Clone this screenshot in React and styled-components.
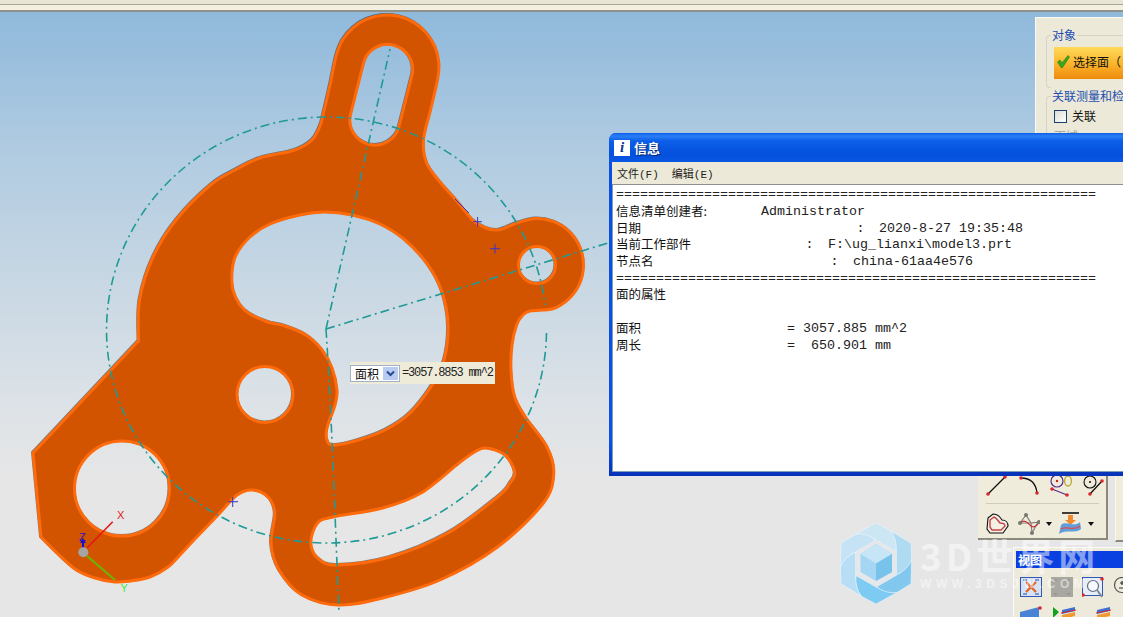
import React from "react";
import styled, { createGlobalStyle } from "styled-components";

const GlobalStyle = createGlobalStyle`
  html, body { margin: 0; padding: 0; background: #e6e6e6; }
  body { font-family: "Liberation Sans", "Noto Sans CJK SC", sans-serif; }
`;

const CJK = `"Noto Sans CJK SC", "Liberation Sans", sans-serif`;
const MONO = `"Liberation Mono", "Noto Sans CJK SC", monospace`;

// catmull-rom through the traced points, so the part outline stays editable
const spline = (pts, closed) => {
  const n = pts.length;
  const at = (i) => (closed ? pts[(i + n) % n] : pts[Math.max(0, Math.min(n - 1, i))]);
  let d = `M${pts[0][0]} ${pts[0][1]}`;
  const last = closed ? n : n - 1;
  for (let i = 0; i < last; i++) {
    const [p0, p1, p2, p3] = [at(i - 1), at(i), at(i + 1), at(i + 2)];
    const c1 = [p1[0] + (p2[0] - p0[0]) / 6, p1[1] + (p2[1] - p0[1]) / 6];
    const c2 = [p2[0] - (p3[0] - p1[0]) / 6, p2[1] - (p3[1] - p1[1]) / 6];
    d += `C${c1[0].toFixed(1)} ${c1[1].toFixed(1)} ${c2[0].toFixed(1)} ${c2[1].toFixed(1)} ${p2[0]} ${p2[1]}`;
  }
  return closed ? d + "Z" : d;
};

const arc = (cx, cy, r, from, to, steps) =>
  Array.from({ length: steps + 1 }, (_, i) => {
    const a = ((from + ((to - from) * i) / steps) * Math.PI) / 180;
    return [+(cx + r * Math.cos(a)).toFixed(1), +(cy + r * Math.sin(a)).toFixed(1)];
  });

const circle = (cx, cy, r) =>
  `M${cx - r} ${cy}A${r} ${r} 0 1 0 ${cx + r} ${cy}A${r} ${r} 0 1 0 ${cx - r} ${cy}Z`;

const outline = [
  [138.5, 341], [139.5, 300], [153, 257], [176, 220], [210.5, 185], [235, 170], [260, 158], [294.7, 150],
  [312, 140], [320, 126], [323, 115], [330, 85],
  ...arc(387, 67, 52, 193, 373, 10),
  [430.5, 110], [423.5, 140], [426.7, 163], [440, 182], [456, 200], [472.6, 220], [486, 228], [497.5, 230], [507, 227],
  ...arc(537, 265, 46.5, -115, 70, 8),
  [530, 311], [522, 316], [516.6, 325], [512, 345], [511, 370], [514.7, 397], [526, 418], [547, 447], [553.8, 473],
  [543.4, 503], [497.5, 547], [440, 580], [382.7, 598], [338.7, 605], [302, 595], [279, 570], [271, 543],
  [274.8, 513], [268, 497], [252.6, 490], [237, 495], [218, 515], [193, 541], [180, 555], [168, 567],
  [150, 577], [130, 581], [115, 582], [95, 578], [76.5, 570], [58, 554], [41, 537],
];

const centerHole = [
  [232, 272], [236, 255], [250, 237], [270, 224], [300, 215], [325, 212], [352, 215], [380, 224], [405, 240],
  [428, 265], [442, 292], [448, 325], [444, 360], [432, 385], [410, 413], [385, 430], [355, 441], [333, 445],
  [327, 440], [327, 428], [335, 405], [337, 390], [332, 368], [322, 350], [306, 335], [285, 326], [268, 322],
  [250, 314], [240, 305], [233, 290],
];

const arcSlot = [
  [486, 448], [505, 455], [514.7, 472], [510, 483], [497.5, 497], [447.8, 533], [390, 557], [336.8, 565], [317.6, 558],
  [310.8, 542], [317.6, 523], [333, 517], [382.7, 508], [421, 493], [459, 463], [474.6, 452],
];

const topSlot = "M363.8 61.9A25 25 0 0 1 412.2 74.1L398.7 127.6A25 25 0 0 1 350.3 115.4Z";

const partPath =
  spline(outline) + "L33 453L138.5 341Z" +
  spline(centerHole, true) + spline(arcSlot, true) + topSlot +
  circle(265, 394.5, 28) + circle(122, 488.5, 47.5) + circle(537, 265, 18.5);

const infoRows = [
  { text: "=".repeat(60) },
  { label: "信息清单创建者:", width: 145, value: "Administrator" },
  { label: "日期", width: 240.5, sep: ":", value: "2020-8-27 19:35:48" },
  { label: "当前工作部件", width: 189.5, sep: ":", value: "F:\\ug_lianxi\\model3.prt" },
  { label: "节点名", width: 214.5, sep: ":", value: "china-61aa4e576" },
  { text: "=".repeat(60) },
  { label: "面的属性" },
  {},
  { label: "面积", width: 171, value: "= 3057.885 mm^2" },
  { label: "周长", width: 171, value: "=  650.901 mm" },
];

const bladeColors = ["#cde6f3", "#aedaf2", "#82c8ee", "#7dcbf3", "#b7def5", "#c5e3f5"];

const Screen = styled.div`
  position: relative;
  width: 1123px;
  height: 617px;
  overflow: hidden;
  background: linear-gradient(180deg, #8fb9db 12px, #b0cbe1 150px, #cbd9e4 300px, #dce2e7 400px, #e6e6e6 480px);
`;

const TopBar = styled.div`
  height: 10px;
  background: linear-gradient(180deg, #e9e5d5 0 4px, #a9a898 4px 5px, #f3f0e2 5px 10px);
  border-bottom: 2px solid #8f9088;
`;

const PartCanvas = styled.svg`
  position: absolute;
  inset: 0;
  width: 1123px;
  height: 617px;
`;

const AxisLabel = styled.text`
  font-family: "Liberation Sans", sans-serif;
  font-size: 11px;
  fill: ${(p) => p.$color};
`;

const AreaTip = styled.div`
  position: absolute;
  left: 350px;
  top: 362px;
  width: 145px;
  height: 22px;
  display: flex;
  align-items: center;
  gap: 2px;
  background: #efebd9;
`;

const TipSelect = styled.div`
  width: 50px;
  height: 17px;
  display: flex;
  align-items: center;
  justify-content: space-between;
  padding: 0 1px 0 4px;
  box-sizing: border-box;
  background: #fff;
  border: 1px solid #a3b1c4;
  font: 12px/15px ${CJK};
  color: #111;
`;

const TipArrow = styled.span`
  width: 15px;
  height: 13px;
  display: flex;
  align-items: center;
  justify-content: center;
  background: #b8cbf0;
`;

const TipValue = styled.span`
  font: 12px "Liberation Mono", monospace;
  letter-spacing: -1.15px;
  color: #222;
  white-space: pre;
`;

const SideDialog = styled.div`
  position: absolute;
  left: 1035px;
  top: 17px;
  width: 100px;
  height: 130px;
  box-sizing: border-box;
  padding: 17px 0 0 10px;
  background: #ece9d8;
  border-left: 1px solid #fafafa;
  border-top: 1px solid #fafafa;
  overflow: hidden;
`;

const Group = styled.div`
  position: relative;
  height: ${(p) => p.$height}px;
  margin-bottom: ${(p) => p.$gap || 0}px;
  box-sizing: border-box;
  padding: 11px 0 0 7px;
  border: 1px solid #d6d3c3;
  border-right: 0;
  border-radius: 4px 0 0 4px;
`;

const Legend = styled.span`
  position: absolute;
  left: 4px;
  top: -10px;
  padding: 0 1px;
  background: #ece9d8;
  font: 12px ${CJK};
  line-height: 17px;
  color: #1d4fb0;
  white-space: nowrap;
`;

const SelectButton = styled.div`
  height: 32px;
  box-sizing: border-box;
  display: flex;
  align-items: center;
  gap: 3px;
  padding: 0 0 3px 3px;
  background: linear-gradient(180deg, #ffd95a 0%, #fbb72e 50%, #ef8a0c 100%);
  font: 12px ${CJK};
  color: #111;
  white-space: nowrap;
`;

const CheckRow = styled.div`
  display: flex;
  align-items: center;
  gap: 5px;
  height: 14px;
  margin-top: 1px;
  font: 12px/14px ${CJK};
  color: #111;
`;

const CheckBox = styled.span`
  width: 11px;
  height: 11px;
  border: 1px solid #1c3f6e;
  background: linear-gradient(135deg, #dedcd2, #fff);
`;

const MutedLabel = styled.div`
  margin-top: 4px;
  font: 12px ${CJK};
  color: #a9a89c;
`;

const InfoWindow = styled.div`
  position: absolute;
  left: 609px;
  top: 133px;
  width: 540px;
  height: 343px;
  display: flex;
  flex-direction: column;
  box-sizing: border-box;
  padding: 0 0 4px 3px;
  background: linear-gradient(180deg, #0a4fdf 0%, #0a52e4 90%, #0731b8 100%);
  border-radius: 7px 0 0 0;
  z-index: 2;
`;

const TitleBar = styled.div`
  height: 29px;
  display: flex;
  align-items: center;
  gap: 4px;
  margin-left: -3px;
  padding-left: 5px;
  border-radius: 7px 0 0 0;
  background: linear-gradient(180deg, #0a5ce8 0, #2a80f6 3px, #0c5ee8 8px, #0450dc 22px, #0a58e4 29px);
  font: bold 13px ${CJK};
  color: #fff;
  text-shadow: 1px 1px 1px #06246e;
`;

const TitleIcon = styled.span`
  width: 16px;
  height: 16px;
  display: flex;
  align-items: center;
  justify-content: center;
  background: #fff;
  font: italic bold 15px "Liberation Serif", serif;
  color: #12309a;
  text-shadow: none;
`;

const MenuBar = styled.div`
  height: 22px;
  display: flex;
  align-items: center;
  gap: 13px;
  padding-left: 5px;
  background: #ece9d8;
  font: 11px ${MONO};
  color: #222;
`;

const TextArea = styled.div`
  flex: 1;
  box-sizing: border-box;
  padding: 2px 0 0 3px;
  background: #fff;
  border: 1px solid #7f9db9;
  border-top-color: #8e8f8f;
  border-right: 0;
`;

const InfoRow = styled.div`
  height: 16.7px;
  display: flex;
  align-items: center;
  white-space: pre;
  font: 13.33px/16px ${MONO};
  color: #222;
`;

const RowLabel = styled.span`
  width: ${(p) => (p.$width ? `${p.$width}px` : "auto")};
  flex: none;
  margin-top: -2px;
  font: 12.5px/14px ${CJK};
  color: #111;
`;

const RowSep = styled.span`
  width: 22.5px;
  flex: none;
`;

const Toolbar = styled.div`
  position: absolute;
  left: 978px;
  top: 460px;
  width: 130px;
  height: 80px;
  box-sizing: border-box;
  padding: 15px 0 0 8px;
  background: #efecdc;
  border-right: 2px solid #8a897c;
  border-bottom: 2px solid #8a897c;
`;

const ToolRow = styled.div`
  display: flex;
  align-items: center;
  gap: ${(p) => p.$gap}px;
`;

const ToolDivider = styled.div`
  height: 1px;
  margin: 6px 7px 8px 0;
  background: #cfccb8;
`;

const Caret = styled.span`
  width: 0;
  height: 0;
  margin: 0 -3px;
  border: 3px solid transparent;
  border-top: 4px solid #111;
  border-bottom: 0;
`;

const NextToolbar = styled.div`
  position: absolute;
  left: 1115px;
  top: 470px;
  width: 20px;
  height: 70px;
  background: #efecdc;
  border-bottom: 2px solid #8a897c;
  border-left: 1px solid #faf9f0;
`;

const ViewPanel = styled.div`
  position: absolute;
  left: 1013px;
  top: 547px;
  width: 120px;
  height: 80px;
  box-sizing: border-box;
  padding: 3px 0 0 2px;
  background: #edeadb;
  border-top: 1px solid #fafafa;
  border-left: 1px solid #fafafa;
`;

const ViewTitle = styled.div`
  height: 17px;
  padding-left: 2px;
  background: #0a3fe2;
  font: bold 12px/17px ${CJK};
  color: #fff;
`;

const ViewIcons = styled.div`
  display: flex;
  gap: ${(p) => p.$gap}px;
  margin: ${(p) => p.$top}px 0 0 ${(p) => p.$left}px;
`;

const Watermark = styled.div`
  position: absolute;
  left: 840px;
  top: 523px;
  display: flex;
  gap: 8px;
  z-index: 3;
`;

const WatermarkText = styled.div`
  padding-top: 11px;
  color: rgba(255, 255, 255, 0.5);
`;

const WatermarkName = styled.div`
  font: bold 37px/42px ${CJK};
  letter-spacing: 4px;
  white-space: nowrap;
`;

const WatermarkUrl = styled.div`
  margin-top: 2px;
  font: bold 12px/12px "Liberation Sans", sans-serif;
  letter-spacing: 4.6px;
  white-space: nowrap;
`;

const Dot = ({ x, y }) => <circle cx={x} cy={y} r="1.8" fill="#d8262a" />;

const LineTool = () => (
  <svg width="22" height="22" viewBox="0 0 22 22">
    <path d="M2 19L19 2" stroke="#111" strokeWidth="1.3" />
    <Dot x={2} y={19} /><Dot x={19} y={2} />
  </svg>
);

const ArcTool = () => (
  <svg width="22" height="22" viewBox="0 0 22 22">
    <path d="M3 3C13 3 18 9 19 18" fill="none" stroke="#111" strokeWidth="1.3" />
    <Dot x={3} y={3} /><Dot x={19} y={18} />
  </svg>
);

const CircleLinkTool = () => (
  <svg width="22" height="22" viewBox="0 0 22 22">
    <circle cx="7" cy="6" r="6" fill="none" stroke="#5b2a8c" strokeWidth="1.2" />
    <circle cx="7" cy="6" r="1.2" fill="#c0262a" />
    <ellipse cx="18" cy="6" rx="3.4" ry="5" fill="none" stroke="#b9ad3a" strokeWidth="1.4" />
    <path d="M2 14L17 20" stroke="#5b2a8c" strokeWidth="1.3" />
    <Dot x={2} y={14} /><Dot x={17} y={20} />
  </svg>
);

const TangentTool = () => (
  <svg width="22" height="22" viewBox="0 0 22 22">
    <circle cx="8" cy="7" r="6" fill="none" stroke="#111" strokeWidth="1.1" />
    <circle cx="8" cy="7" r="1" fill="#111" />
    <path d="M8 19L20 6" stroke="#111" strokeWidth="1.3" />
    <Dot x={8} y={19} /><Dot x={20} y={6} />
  </svg>
);

const HeartTool = () => (
  <svg width="23" height="22" viewBox="0 0 23 22">
    <path d="M2 5L7 1C12 1 14 4 16 7C20 7 22 10 22 13L17 20H4L1 16Z" fill="#f4f1e4" stroke="#111" strokeWidth="1.1" />
    <path d="M4 7L8 4C11 5 12 8 14 10C17 10 19 11 19 13L15 17H6L4 14Z" fill="none" stroke="#c8424a" strokeWidth="1.4" />
  </svg>
);

const SplineTool = () => (
  <svg width="22" height="22" viewBox="0 0 22 22">
    <path d="M2 10L8 2L13 10L21 9M2 10L13 10M13 10L14 20L20 9" fill="none" stroke="#7f8078" strokeWidth="1.2" />
    <path d="M2 10C6 6 9 9 13 13C16 15 19 13 21 9" fill="none" stroke="#c8323a" strokeWidth="1.2" />
    {[[2, 10], [8, 2], [14, 20], [21, 9]].map(([x, y]) => (
      <circle key={x} cx={x} cy={y} r="2" fill="#77786f" />
    ))}
  </svg>
);

const SurfaceTool = () => (
  <svg width="24" height="23" viewBox="0 0 24 23">
    <path d="M4 1H21" stroke="#111" strokeWidth="1.6" />
    <path d="M10 3H15V8H18L12.5 13L7 8H10Z" fill="#f08a2c" />
    <path d="M3 13C8 8 16 16 22 10L23 17C18 22 8 17 1 22Z" fill="#5f9fdc" />
    <path d="M3 17C9 13 15 20 22 14" fill="none" stroke="#e44c4c" strokeWidth="1.3" />
  </svg>
);

const FitIcon = () => (
  <svg width="22" height="20" viewBox="0 0 22 20">
    <rect x="0.5" y="0.5" width="21" height="19" fill="#d7e2f4" stroke="#2f57b4" />
    <path d="M6 5L16 15M16 5L6 15" stroke="#e2662a" strokeWidth="2.4" />
    <path d="M3 3H7M15 3H19M3 17H7M15 17H19" stroke="#5b7cc8" strokeWidth="1.3" />
  </svg>
);

const GreyIcon = () => (
  <svg width="22" height="20" viewBox="0 0 22 20">
    <rect width="22" height="20" fill="#a9a7a1" />
    <path d="M3 3H6M16 3H19M3 17H6M16 17H19" stroke="#8c8a84" strokeWidth="1.2" />
  </svg>
);

const ZoomIcon = () => (
  <svg width="22" height="21" viewBox="0 0 22 21">
    <rect x="0.5" y="0.5" width="20" height="18" fill="#e8eef8" stroke="#2f57b4" />
    <circle cx="11" cy="9" r="5.5" fill="#f8fbff" stroke="#606e80" strokeWidth="1.2" />
    <path d="M15 13L20 20" stroke="#808a94" strokeWidth="2" />
    <Dot x={20} y={2} /><Dot x={1} y={18} />
  </svg>
);

const PanIcon = () => (
  <svg width="18" height="18" viewBox="0 0 18 18">
    <circle cx="9" cy="8" r="7.5" fill="#efecdc" stroke="#555" strokeWidth="1.2" />
    <path d="M9 4V8M7 6H11M6 11H12" stroke="#333" strokeWidth="1.2" />
  </svg>
);

const StackIcon = ({ arrow }) => (
  <svg width="24" height="14" viewBox="0 0 24 14">
    {arrow && <path d="M0 1L6 6L0 12Z" fill="#12a01e" />}
    <path d="M9 4L22 1V5L9 8Z" fill="#3f6fd0" />
    <path d="M9 9L22 6V10L9 13Z" fill="#ef9b32" />
    <path d="M8 7L23 4" stroke="#d8262a" />
  </svg>
);

const BlueTabIcon = () => (
  <svg width="22" height="14" viewBox="0 0 22 14">
    <path d="M0 6L19 1V14H0Z" fill="#4a83d6" />
    <Dot x={20} y={2} />
  </svg>
);

const WatermarkLogo = () => (
  <svg width="72" height="81" viewBox="0 0 72 81">
    {bladeColors.map((color, i) => (
      <path
        key={color}
        d="M15 11.5L36 0L51 8Q58 16 56 28.5L36 17Q25 10 15 11.5Z"
        fill={color}
        stroke="#eaf4fa"
        strokeWidth="0.6"
        transform={`rotate(${i * 60} 36 40.5)`}
      />
    ))}
    <path d="M36 17L56 28.5V52.5L36 64L16 52.5V28.5Z" fill="#e4e8ea" />
    <path d="M36 21L52 31V49L36 58L20.5 49V31Z" fill="#a5d6f3" />
    <path d="M36 21L52 31L36 40.5L20.5 31Z" fill="#c6e5f6" />
    <path d="M52 31V49L36 58V40.5Z" fill="#77c3eb" />
  </svg>
);

const Part = () => (
  <PartCanvas viewBox="0 0 1123 617">
    <path d={partPath} fill="none" stroke="#2a2a2a" strokeWidth="3" fillRule="evenodd" transform="translate(-0.5 -0.6)" opacity="0.55" />
    <path d={partPath} fill="#d35400" stroke="#ff6a0a" strokeWidth="3" fillRule="evenodd" />
    <g fill="none" stroke="#1f9a96" strokeWidth="1.6" strokeDasharray="9 4 2 4">
      <path d="M546.5 333A220 213 0 1 1 545 305" />
      <path d="M326 329L390 49" />
      <path d="M326 329C332 420 335 520 339 613" />
      <path d="M326 329L608 243" />
    </g>
    <g stroke="#3a36c4" strokeWidth="1" fill="none">
      <path d="M490 248.7H500M495 243.7V253.7" />
      <path d="M473 221.7H482M477.6 217V226.5" />
      <path d="M455 199L469 213" />
      <path d="M228 501.7H238M232.7 497V507" />
    </g>
    <path d="M87 548L112.7 521.7" stroke="#e01818" strokeWidth="1.6" />
    <path d="M87 556L115 580" stroke="#66b800" strokeWidth="2" />
    <path d="M83 548V541" stroke="#1212d0" strokeWidth="2" />
    <path d="M80 543L83 538L86 543Z" fill="#1212d0" />
    <circle cx="83.3" cy="552.3" r="5" fill="#a4a4a4" />
    <AxisLabel x="117" y="519" $color="#e01818">X</AxisLabel>
    <AxisLabel x="79" y="541" $color="#3010c0">Z</AxisLabel>
    <AxisLabel x="120.5" y="592" $color="#44e844">Y</AxisLabel>
  </PartCanvas>
);

const App = () => (
  <Screen>
    <GlobalStyle />
    <TopBar />
    <Part />
    <AreaTip>
      <TipSelect>
        面积
        <TipArrow>
          <svg width="9" height="7" viewBox="0 0 9 7">
            <path d="M1 1.5L4.5 5L8 1.5" fill="none" stroke="#2b4a8c" strokeWidth="2" />
          </svg>
        </TipArrow>
      </TipSelect>
      <TipValue>=3057.8853 mm^2</TipValue>
    </AreaTip>

    <SideDialog>
      <Group $height={53} $gap={8}>
        <Legend>对象</Legend>
        <SelectButton>
          <svg width="13" height="13" viewBox="0 0 13 13">
            <path d="M0.5 7L3 5L5 8L11 0.5L12.5 2L5.5 12.5H4Z" fill="#3aa81e" stroke="#1f7c14" strokeWidth="0.6" />
          </svg>
          选择面（
        </SelectButton>
      </Group>
      <Group $height={60}>
        <Legend>关联测量和检</Legend>
        <CheckRow>
          <CheckBox />
          关联
        </CheckRow>
        <MutedLabel>面域</MutedLabel>
      </Group>
    </SideDialog>

    <InfoWindow>
      <TitleBar>
        <TitleIcon>i</TitleIcon>
        信息
      </TitleBar>
      <MenuBar>
        <span>文件(F)</span>
        <span>编辑(E)</span>
      </MenuBar>
      <TextArea>
        {infoRows.map((row, i) => (
          <InfoRow key={i}>
            {row.text}
            {row.label && <RowLabel $width={row.width}>{row.label}</RowLabel>}
            {row.sep && <RowSep>{row.sep}</RowSep>}
            {row.value}
          </InfoRow>
        ))}
      </TextArea>
    </InfoWindow>

    <Toolbar>
      <ToolRow $gap={10}>
        <LineTool />
        <ArcTool />
        <CircleLinkTool />
        <TangentTool />
      </ToolRow>
      <ToolDivider />
      <ToolRow $gap={9}>
        <HeartTool />
        <SplineTool />
        <Caret />
        <SurfaceTool />
        <Caret />
      </ToolRow>
    </Toolbar>
    <NextToolbar />

    <ViewPanel>
      <ViewTitle>视图</ViewTitle>
      <ViewIcons $gap={9} $top={9} $left={4}>
        <FitIcon />
        <GreyIcon />
        <ZoomIcon />
        <PanIcon />
      </ViewIcons>
      <ViewIcons $gap={11} $top={8} $left={4}>
        <BlueTabIcon />
        <StackIcon arrow />
        <StackIcon />
      </ViewIcons>
    </ViewPanel>

    <Watermark>
      <WatermarkLogo />
      <WatermarkText>
        <WatermarkName>3D世界网</WatermarkName>
        <WatermarkUrl>WWW.3DSJW.COM</WatermarkUrl>
      </WatermarkText>
    </Watermark>
  </Screen>
);

export default App;
